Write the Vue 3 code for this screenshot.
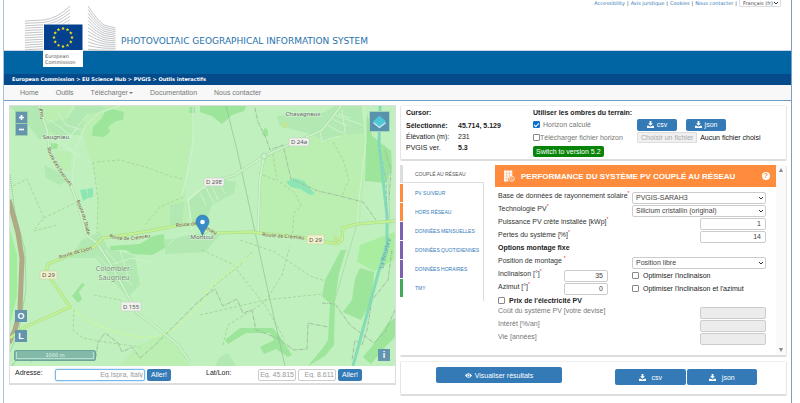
<script setup>
import { ref } from 'vue'

const stripes = Array.from({ length: 13 }, (_, i) => i)
const stars = Array.from({ length: 12 }, (_, i) => {
  const a = (i * Math.PI) / 6
  const cx = 63 + 9 * Math.sin(a)
  const cy = 37.5 - 9 * Math.cos(a)
  const pts = Array.from({ length: 10 }, (_, k) => {
    const r = k % 2 ? 0.8 : 1.9
    const b = (k * Math.PI) / 5
    return `${(cx + r * Math.sin(b)).toFixed(2)},${(cy - r * Math.cos(b)).toFixed(2)}`
  })
  return pts.join(' ')
})

const legal = ['Accessibility', 'Avis juridique', 'Cookies', 'Nous contacter']
const crumbs = ['European Commission', 'EU Science Hub', 'PVGIS', 'Outils interactifs']
const menu = ['Home', 'Outils', 'Télécharger', 'Documentation', 'Nous contacter']
const tabs = [
  { name: 'COUPLÉ AU RÉSEAU', tone: 'active' },
  { name: 'PV SUIVEUR', tone: 'orange' },
  { name: 'HORS RÉSEAU', tone: 'orange' },
  { name: 'DONNÉES MENSUELLES', tone: 'purple' },
  { name: 'DONNÉES QUOTIDIENNES', tone: 'purple' },
  { name: 'DONNÉES HORAIRES', tone: 'purple' },
  { name: 'TMY', tone: 'green' }
]
const costs = [
  { id: 'cost', label: 'Coût du système PV [votre devise]' },
  { id: 'interest', label: 'Intérêt [%/an]' },
  { id: 'life', label: 'Vie [années]' }
]
const horizon = ref(true)
const peak = ref('1')
const loss = ref('14')
const slope = ref('35')
const azimuth = ref('0')
</script>

<template>
  <div class="page">
    <header class="top">
      <svg class="logo" viewBox="24 4 93 66" aria-label="European Commission">
        <g fill="none" stroke="#c3c5c8" stroke-width="1">
          <path v-for="i in stripes" :key="'l' + i" :d="`M25 ${21 + 2.4 * i}L44 ${20 + 2.4 * i}Q58 ${18 + 2.5 * i} 70 ${6 + 3.4 * i}`" />
          <path v-for="i in stripes" :key="'r' + i" :d="`M88 ${6 + 3.6 * i}Q97 ${20 + 2.5 * i} 104 ${25 + 2.1 * i}L115.500 ${28 + 1.85 * i}`" />
        </g>
        <rect x="43" y="23.500" width="40" height="43.500" fill="#fff" />
        <rect x="44" y="24.500" width="38.500" height="25.500" fill="#03418f" />
        <polygon v-for="(s, i) in stars" :key="i" :points="s" fill="#f7e017" />
        <text x="45" y="58" class="logo-text">European</text>
        <text x="45" y="64" class="logo-text">Commission</text>
      </svg>
      <h1>PHOTOVOLTAIC GEOGRAPHICAL INFORMATION SYSTEM</h1>
      <div class="legal">
        <template v-for="l in legal" :key="l"><a href="#">{{ l }}</a><span>|</span></template>
        <span class="pick lang">
          <select aria-label="Langue"><option>Français (fr)</option></select>
          <svg viewBox="0 0 6 4"><path d="M1 1l2 2 2-2" /></svg>
        </span>
      </div>
    </header>
    <div class="band"></div>
    <nav class="crumbs">
      <template v-for="(c, i) in crumbs" :key="c"><span v-if="i"> &gt; </span><a href="#">{{ c }}</a></template>
    </nav>
    <nav class="menu">
      <a v-for="m in menu" :key="m" href="#">{{ m }}<i v-if="m === 'Télécharger'" class="caret"></i></a>
    </nav>

    <main>
      <section class="left">
        <div class="map">
          <svg class="tiles" viewBox="10 106 385 260" preserveAspectRatio="xMidYMid slice">
            <rect x="10" y="106" width="385" height="260" fill="#bff0be" />
            <g fill="#bbefb2">
              <path d="M76 106H195L191 145 184 185 188 225 150 231 108 237 98 238 97 180 87 148Z" />
              <path d="M262 157L330 126 366 120 364 180 360 224 343 228 338 244 258 231 261 180Z" />
              <path d="M42 106H72L62 125 53 140 47 130ZM54 150L72 152 70 172 62 168Z" />
              <path d="M118 366L140 345 168 332 190 366Z" />
            </g>
            <g fill="#b2e8b2">
              <path d="M10 106H40L48 130 40 140 24 120ZM45 127L55 135 80 135 86 115 108 110 100 106H76L68 118 50 122Z" />
              <path d="M44 165L70 178 60 185 46 178ZM82 240L100 232 108 248 135 256 140 285 128 297 112 280 96 258 70 258Z" />
              <path d="M186 203L200 190 225 180 236 182 234 193 212 205 205 225 190 225ZM165 240L205 232 220 235 205 252 165 254Z" />
              <path d="M277 116L325 112 335 106 362 106 364 133 338 136 325 143 315 135 280 126Z" />
              <path d="M215 366L220 357 228 353 236 366ZM170 205L184 202 182 225 170 225Z" />
            </g>
            <g fill="#9ce59a">
              <path d="M105 112L112 109 124 112 123 120 116 121 108 127 110 132 104 137 92 136 93 127 101 119Z" />
              <path d="M200 106H246L244 111 232 115 222 124 212 116 200 112Z" />
              <path d="M367 113L372 136 391 151 392 168 386 183 365 181Z" />
              <path d="M110 246L140 244 153 236 164 234 165 248 152 255 132 254 126 250H111Z" />
              <path d="M82 283L85 284 79 292 82 299 78 303 72 296Z" />
              <path d="M341 250H346L339 273 335 300 334 345 325 356 308 366 322 349 328 340 330 304 322 296 325 280Z" />
              <path d="M360 268L374 272 372 300 361 320 343 312 352 300 355 279Z" />
              <path d="M395 318V337L385 347 371 364 363 357 373 345 388 323Z" />
              <path d="M225 340L240 328 273 328 281 338 292 355 288 357 276 349 264 354 260 347 274 340 270 333 246 333 228 344Z" />
              <path d="M190 107h5v6h-6zM51 143l7 1-1 5h-6zM265 127l3 4v5l-6-1z" />
            </g>
            <path d="M360 245L395 232 394 260 374 271 357 262Z" fill="#a9eda0" />
            <path d="M80 190l6-1 2 9-5 3zM87 189l6-1v9l-5 1zM286 182L294 178 304 181 315 194 310 195 300 189 291 187Z" fill="#8ce6b4" />
            <path d="M282 121l7 2-3 5h-4zM334 235l6 3-3 7h-5z" fill="#bfe79a" />
            <path d="M10 230V325L17 295V255Z" fill="#a0ee9c" />

            <g class="local">
              <path d="M75 150L86 125 100 112 120 106M53 137L65 145 76 153 80 155M65 145L75 130 88 114M50 120L60 127 72 137M58 112L66 125 82 130M69 137L77 129" />
              <path d="M54 140L76 155 73 170 72 185M193 106V145L187 175 181 199" />
              <path d="M200 193L206 205M206 188L214 203M212 186L218 200M220 184L225 194" />
              <path d="M320 130L322 142 332 138 340 136M326 124L336 130 346 134M332 119L348 126M338 114L350 118M342 110L345 132M335 115L362 125" />
              <path d="M363 106L366 140 360 190 357 224M189 232L197 239 211 233M168 245L178 235 187 232" />
              <path d="M105 250L118 264M120 250L128 276M113 264L132 258 150 262M60 256L75 250M120 276L132 285M97 256L112 270" />
            </g>
            <g class="path">
              <path d="M97 162L120 160 145 167 170 176 183 179M93 162L98 200 97 233M183 197L160 207 145 225M13 186L27 179 34 195 44 218 33 231M44 218L75 203M34 231L57 225" />
              <path d="M273 154L277 180 295 193 301 206 294 213 292 240M333 142L343 160 349 180 341 198M275 180L258 173" />
              <path d="M200 302L215 285 240 265 252 252M202 250L232 264 265 305 285 340M240 240L275 252 310 276 325 281M200 315L265 300 322 294M94 295L120 300 138 313M74 309L73 330 83 338 105 342 140 347M223 345L228 325 265 302 282 275 290 246" />
            </g>
            <path class="pale" d="M70 307L90 322 115 332 140 337 155 337 175 328 200 306 210 287 235 267 251 255" />
            <g class="bound">
              <path d="M255 108L258 122 266 138 270 150 283 145 291 179 318 191 340 196 363 202 376 220" />
              <path d="M12 366L20 355 32 362M96 357L98 342 105 333 118 343 122 352 132 347 140 358 155 345 170 330 200 300 215 289 223 306 237 299 243 313 252 310 256 330 277 338 294 350 307 349 308 323 328 327M322 303L335 304 350 325 374 343 385 332 395 310" />
              <path d="M385 150L391 170 389 200M392 250L388 280 372 300 367 330 362 345 355 340 352 360" />
            </g>
            <path d="M226 106L237 150 248 200 268 291 285 366" fill="none" stroke="#8eb796" stroke-width=".6" />
            <path d="M384 145L388 175 390 225M357 224L345 265 335 300" fill="none" stroke="#a9d6a6" stroke-width=".7" />
            <path d="M380 106L379 145 387 215 387 245 378 274 353 366" fill="none" stroke="#84dcb5" stroke-width="3" />
            <path d="M379 113L379 145 386 180 387 220" fill="none" stroke="#8cc4d2" stroke-width="1" stroke-dasharray="4 2" />

            <path d="M9 200L18 233 22 258 20 310 15 330 9 343" fill="none" stroke="#afaa85" stroke-width="5" />
            <path d="M10 175L15 212 25 250 26 290 19 330 10 352" fill="none" stroke="#80ae87" stroke-width=".8" stroke-dasharray="1 1" />

            <g class="road-case"><path d="M39 106L47 130 49 148 58 165 69 180 79 208 86 235 97 243 108 260 122 285 137 313 155 326 178 345 190 362" /><path d="M200 190L215 181 235 175 264 156 300 140 322 130 332 118 341 106M264 156L260 180 258 232" /></g>
            <g class="road"><path d="M39 106L47 130 49 148 58 165 69 180 79 208 86 235 97 243 108 260 122 285 137 313 155 326 178 345 190 362" /><path d="M200 190L215 181 235 175 264 156 300 140 322 130 332 118 341 106M264 156L260 180 258 232M192 230L188 200 205 186" /></g>
            <circle cx="264" cy="156" r="3" fill="#c8f1c6" stroke="#9dce9f" stroke-width=".6" />
            <path class="main-case" d="M10 338L25 327 70 307 46 272 48 264 80 251 94 247 103 238 118 236 150 231 180 225 197 224 217 233 250 232 300 237 337 244 342 240 343 228 357 224 395 221" />
            <path class="main" d="M10 338L25 327 70 307 46 272 48 264 80 251 94 247 103 238 118 236 150 231 180 225 197 224 217 233 250 232 300 237 337 244 342 240 343 228 357 224 395 221" />

            <defs>
              <path id="way-a" d="M47 148Q51 163 76 194" />
              <path id="way-b" d="M76 201Q86 220 90 254" />
              <path id="way-c" d="M109 237Q128 245 170 232" />
              <path id="way-d" d="M176 227L196 225 230 242" />
              <path id="way-e" d="M262 236L322 241" />
              <path id="way-f" d="M60 259Q77 252 110 246" />
            </defs>
            <g class="way">
              <text><textPath href="#way-a">Route des Eversses</textPath></text>
              <text><textPath href="#way-b">Route du Stade</textPath></text>
              <text><textPath href="#way-c">Route de Crémieu</textPath></text>
              <text><textPath href="#way-d">Route de Crémieu</textPath></text>
              <text><textPath href="#way-e">Route de Crémieu</textPath></text>
              <text><textPath href="#way-f">Route de Lyon</textPath></text>
              <text transform="translate(43 119) rotate(-92)">nauf</text>
            </g>
            <g class="place">
              <text x="56" y="139">Saugnieu</text>
              <text x="303" y="116">Chavagneux</text>
              <text x="202" y="239">Montcul</text>
            </g>
            <g class="town"><text x="114" y="271">Colombier-</text><text x="114" y="280">Saugnieu</text></g>
            <text class="river" transform="translate(383 269) rotate(-75)">La Bourbre</text>
            <g class="shield white">
              <rect x="289" y="138" width="20" height="8" rx="1" /><text x="299" y="144">D 24a</text>
              <rect x="204" y="178" width="20" height="8" rx="1" /><text x="214" y="184">D 29E</text>
              <rect x="121" y="302" width="20" height="9" rx="1" /><text x="131" y="309">D 155</text>
            </g>
            <g class="shield">
              <rect x="307" y="235" width="17" height="9" rx="1" /><text x="315.500" y="242">D 29</text>
              <rect x="40" y="271" width="17" height="8" rx="1" /><text x="48.500" y="277">D 29</text>
            </g>
            <path d="M202.500 235.500C200 228 196 226 196 221.500a6.500 6.500 0 0 1 13 0C209 226 205 228 202.500 235.500Z" fill="#398cc7" stroke="#2d75aa" stroke-width=".6" />
            <circle cx="202.500" cy="222" r="2.300" fill="#fff" />
          </svg>
          <div class="zoomers">
            <button type="button" aria-label="Zoom avant"><svg viewBox="0 0 11 11"><path d="M5.500 3v5M3 5.500h5" /></svg></button>
            <button type="button" aria-label="Zoom arrière"><svg viewBox="0 0 11 11"><path d="M3 5.500h5" /></svg></button>
          </div>
          <button type="button" class="layers" aria-label="Couches">
            <svg viewBox="0 0 20 20"><path d="M3 11.500L10 17l7-5.500-7-4z" fill="#d4f0f4" /><path d="M3 10L10 4l7 6-7 5.500z" fill="#50c8d8" /></svg>
          </button>
          <div class="letters"><button type="button">O</button><button type="button">L</button></div>
          <div class="scale"><span>1000 m</span></div>
          <button type="button" class="info">i</button>
        </div>
        <form class="search" @submit.prevent>
          <div class="find">
            <label for="address">Adresse:</label>
            <input id="address" class="focus" placeholder="Eg.Ispra, Italy" />
            <button class="go">Aller!</button>
          </div>
          <div class="find">
            <label for="lat">Lat/Lon:</label>
            <input id="lat" class="coord" placeholder="Eg. 45.815" />
            <input class="coord" aria-label="Longitude" placeholder="Eg. 8.611" />
            <button class="go">Aller!</button>
          </div>
        </form>
      </section>

      <section class="right">
        <div class="card cursor">
          <div class="position">
            <strong>Cursor:</strong>
            <dl>
              <dt><b>Sélectionné:</b></dt><dd><b>45.714, 5.129</b></dd>
              <dt>Élévation (m):</dt><dd>231</dd>
              <dt>PVGIS ver.</dt><dd><b>5.3</b></dd>
            </dl>
          </div>
          <div class="shadow">
            <strong>Utiliser les ombres du terrain:</strong>
            <div class="shadow-row">
              <label class="muted"><input v-model="horizon" type="checkbox" />Horizon calculé</label>
              <div class="small-buttons">
                <button v-for="f in ['csv', 'json']" :key="f" type="button" class="primary">
                  <svg class="dl" viewBox="0 0 12 12"><path d="M4.500 0h3v4H10L6 8 2 4h2.500zM0 8h3l3 2 3-2h3v4H0z" /></svg>{{ f }}
                </button>
              </div>
            </div>
            <div class="shadow-row">
              <label class="muted tight"><input type="checkbox" />Télécharger fichier horizon</label>
              <div class="file"><button type="button" disabled>Choisir un fichier</button><span>Aucun fichier choisi</span></div>
            </div>
            <button type="button" class="switch">Switch to version 5.2</button>
          </div>
        </div>

        <div class="card tool">
          <nav class="tabs">
            <a v-for="t in tabs" :key="t.name" href="#" :class="t.tone">{{ t.name }}</a>
          </nav>
          <form class="form" @submit.prevent>
            <h2>
              <svg class="panel" viewBox="0 0 12 13"><path d="M0 0h9v6a4 4 0 0 0-4 6H0z" fill="#fff" /><path d="M0 3h9M0 6h7M0 9h5M3 0v12M6 0v7" stroke="#ff8c3c" stroke-width=".4" /><circle cx="8.500" cy="9" r="2.800" fill="#ff8c3c" stroke="#fff" stroke-width=".8" /><path d="M9 7L7.500 9.300h2L8.200 11" stroke="#fff" stroke-width=".6" fill="none" /></svg>
              <span>PERFORMANCE DU SYSTÈME PV COUPLÉ AU RÉSEAU</span>
              <button type="button" class="help">?</button>
            </h2>
            <div class="rows">
              <div class="row"><label for="db">Base de données de rayonnement solaire<sup>*</sup></label>
                <span class="pick"><select id="db"><option>PVGIS-SARAH3</option></select><svg viewBox="0 0 6 4"><path d="M1 1l2 2 2-2" /></svg></span></div>
              <div class="row"><label for="tech">Technologie PV<sup>*</sup></label>
                <span class="pick"><select id="tech"><option>Silicium cristallin (original)</option></select><svg viewBox="0 0 6 4"><path d="M1 1l2 2 2-2" /></svg></span></div>
              <div class="row"><label for="peak">Puissance PV crête installée [kWp]<sup>*</sup></label><input id="peak" v-model="peak" class="half" /></div>
              <div class="row"><label for="loss">Pertes du système [%]<sup>*</sup></label><input id="loss" v-model="loss" class="half" /></div>
              <div class="row"><b>Options montage fixe</b></div>
              <div class="row"><label for="mount">Position de montage <sup>*</sup></label>
                <span class="pick"><select id="mount"><option>Position libre</option></select><svg viewBox="0 0 6 4"><path d="M1 1l2 2 2-2" /></svg></span></div>
              <div class="row angle"><label for="slope">Inclinaison [°]<sup>*</sup></label><input id="slope" v-model="slope" />
                <label class="tick"><input type="checkbox" />Optimiser l'inclinaison</label></div>
              <div class="row angle"><label for="azimuth">Azimut [°]<sup>*</sup></label><input id="azimuth" v-model="azimuth" />
                <label class="tick"><input type="checkbox" />Optimiser l'inclinaison et l'azimut</label></div>
              <label class="tick price"><input type="checkbox" /><b>Prix de l'électricité PV</b></label>
              <div v-for="c in costs" :key="c.id" class="row muted"><label :for="c.id">{{ c.label }}</label><input :id="c.id" class="half" disabled /></div>
            </div>
          </form>
          <div class="scrollbar"><i class="up"></i><i class="down"></i></div>
        </div>

        <div class="card actions">
          <button type="button" class="primary view">
            <svg viewBox="0 0 14 10"><path d="M0 5Q7-4 14 5 7 14 0 5Z" fill="#fff" /><circle cx="7" cy="5" r="3.200" fill="#337ab7" /><circle cx="7" cy="5" r="2" fill="#fff" /></svg>
            Visualiser résultats
          </button>
          <div class="exports">
            <button v-for="f in ['csv', 'json']" :key="f" type="button" class="primary">
              <svg class="dl" viewBox="0 0 12 12"><path d="M4.500 0h3v4H10L6 8 2 4h2.500zM0 8h3l3 2 3-2h3v4H0z" /></svg><span>{{ f }}</span>
            </button>
          </div>
        </div>
      </section>
    </main>
  </div>
</template>

<style>
body { margin: 0; background: #fff; }
</style>

<style scoped>
* { box-sizing: border-box; }
.page { margin: 0 8px 0 3px; min-height: 100vh; border-left: 1px solid #a8c1de; border-right: 1px solid #7ba0c8; font: 7px/9px "Liberation Sans", Arial, sans-serif; color: #333; }
button, input, select { font: inherit; margin: 0; }
button { border: 0; padding: 0; cursor: pointer; }
a { color: #337ab7; text-decoration: none; }
input, select { min-width: 0; border: 1px solid #ccc; border-radius: 2px; background: #fff; color: #444; }

.top { position: relative; height: 51px; padding: 0 10px 0 117px; display: flex; justify-content: space-between; border-bottom: 1px solid #c9d5e5; }
.logo { position: absolute; left: 20px; top: 4px; width: 93px; height: 66px; }
.logo-text { font: 5px "DejaVu Sans", sans-serif; fill: #555; }
h1 { margin: 0; align-self: flex-end; padding-bottom: 2px; font: 9px/13px "DejaVu Sans", Verdana, sans-serif; color: #2672ab; white-space: nowrap; }
.legal { display: flex; align-items: center; height: 6px; gap: 2px; font: 5px/6px "DejaVu Sans", Verdana, sans-serif; white-space: nowrap; }
.lang { width: 42px; height: 8px; }
.lang select { height: 8px; padding: 0 2px; font-size: 5px; line-height: 6px; border-color: #ddd; }

.band { height: 23px; background: #0065a2; }
.crumbs { height: 11px; padding-left: 8px; background: #054a8a; color: #fff; font: bold 5px/10px "DejaVu Sans", Verdana, sans-serif; white-space: pre; }
.crumbs a { color: #fff; }
.menu { display: flex; align-items: center; gap: 17px; height: 16px; padding-left: 16px; background: #f8f8f8; border-bottom: 1px solid #6f9bc7; }
.menu a { color: #777; }
.caret { display: inline-block; margin-left: 1px; vertical-align: middle; border: 2px solid transparent; border-top-color: #777; border-bottom: 0; }

main { display: grid; grid-template-columns: 1fr 1fr; gap: 4px; padding: 4px 4px 8px 5px; }
.left { align-self: start; border: 1px solid #ddd; border-bottom: 2px solid #ddd; }
.map { position: relative; }
.tiles { display: block; width: 100%; height: 260px; font-family: "Noto Sans", sans-serif; }
.local path { fill: none; stroke: #cff3ce; stroke-width: 1; }
.path path { fill: none; stroke: #a2d08f; stroke-width: .8; stroke-dasharray: 3 2; }
.pale { fill: none; stroke: #cdf6a0; stroke-width: 1.5; stroke-dasharray: 5 2; }
.bound path { fill: none; stroke: #a0bd9f; stroke-width: 1; stroke-dasharray: 4 1 1 1; }
.road-case path { fill: none; stroke: #a4d6a5; stroke-width: 2.6; }
.road path { fill: none; stroke: #cef4ca; stroke-width: 1.8; }
.main-case { fill: none; stroke: #a5db84; stroke-width: 3; }
.main { fill: none; stroke: #c5f195; stroke-width: 2; }
.way text { font-size: 5px; fill: #5b4d3a; stroke: #d6f4c5; stroke-width: .6px; paint-order: stroke; }
.place text { font-size: 6px; text-anchor: middle; fill: #555e55; stroke: #e0f6df; stroke-width: 1px; paint-order: stroke; }
.town text { font-size: 7px; text-anchor: middle; fill: #7e8e7e; stroke: #d5f5d3; stroke-width: 1px; paint-order: stroke; }
.river { font-size: 6px; fill: #659abe; }
.shield rect { fill: #f1f0cd; stroke: #cdd5a5; stroke-width: .6; }
.shield.white rect { fill: #f0f1ed; stroke: #c3d0c2; }
.shield text { font-size: 6px; text-anchor: middle; fill: #555; }
.map button { display: grid; place-items: center; background: #6494ae; color: #fff; font-weight: bold; }
.zoomers, .letters { position: absolute; left: 5px; display: grid; }
.zoomers { top: 5px; gap: 1px; padding: 1px; background: #9fcda9; border-radius: 1px; }
.zoomers button { width: 11px; height: 11px; }
.zoomers svg { width: 11px; height: 11px; fill: none; stroke: #fff; stroke-width: 1.6; }
.letters { top: 204px; gap: 8px; }
.letters button, .map .info { width: 12px; height: 12px; font-size: 9px; line-height: 12px; }
.map .layers { position: absolute; right: 5px; top: 5px; width: 21px; height: 21px; border: 1px solid #a5d4bc; background: #5893ab; }
.layers svg { width: 19px; height: 19px; }
.map .info { position: absolute; right: 5px; bottom: 5px; }
.scale { position: absolute; left: 4px; bottom: 5px; width: 82px; height: 11px; padding: 1px; background: #82b9a9; border: 1px solid #6ca39b; border-radius: 2px; }
.scale span { display: block; border: 1px solid #b9dfce; border-top: 0; height: 7px; font: 5px/6px "DejaVu Sans", sans-serif; color: #e5f5ed; text-align: center; }

.search { display: grid; grid-template-columns: 1fr 1fr; gap: 35px; height: 17px; padding: 0 33px 0 5px; }
.find { display: flex; align-items: center; justify-content: flex-end; gap: 2px; }
.find label { margin-right: auto; align-self: flex-start; padding-top: 2px; color: #222; }
.find input { width: 90px; height: 12px; padding: 0 1px; text-align: right; }
.find .coord { width: 38px; }
.find .focus { border-color: #7ab8ea; box-shadow: 0 0 2px #8cc5f0; }
input::placeholder { color: #999; opacity: 1; }
.go { width: 24px; height: 12px; border-radius: 2px; background: #337ab7; color: #fff; }

.right { display: grid; gap: 4px; align-content: start; }
.card { border: 1px solid #e6e6e6; border-top-color: #f0f0f0; border-bottom: 2px solid #ddd; border-radius: 2px; background: #fff; }
.cursor { display: grid; grid-template-columns: 127px 1fr; height: 56px; padding: 2px 5px; color: #222; }
dl { display: grid; grid-template-columns: 52px 1fr; margin: 3px 0 0; line-height: 11px; }
dd { margin: 0; }
.shadow { display: grid; align-content: start; justify-items: start; }
.shadow > strong { line-height: 10px; }
.shadow-row { display: grid; grid-template-columns: 104px 1fr; align-items: center; height: 13px; }
.muted { color: #777; }
.muted label, label.muted { white-space: nowrap; }
label.muted { display: flex; align-items: center; gap: 3px; }
label.tight { gap: 0; }
input[type="checkbox"] { appearance: none; flex: none; width: 7px; height: 7px; border: 1px solid #888; border-radius: 1px; display: grid; place-items: center; }
input[type="checkbox"]:checked { background: #0b6fd3; border-color: #0b6fd3; }
input[type="checkbox"]:checked::before { content: ""; width: 4px; height: 2px; border: solid #fff; border-width: 0 0 1px 1px; transform: rotate(-45deg); }
.primary { display: flex; align-items: center; justify-content: center; gap: 3px; border-radius: 2px; background: #337ab7; color: #fff; }
.dl { width: 7px; height: 7px; fill: #fff; }
.small-buttons { display: grid; grid-template-columns: 40px 40px; gap: 9px; }
.small-buttons button { height: 12px; }
.file { display: flex; align-items: center; gap: 3px; white-space: nowrap; color: #111; }
.file button { height: 11px; padding: 0 3px; border: 1px solid #ddd; border-radius: 1px; background: #f0f0f0; color: #aaa; }
.switch { height: 11px; padding: 0 3px; margin-top: 2px; border-radius: 2px; background: #088408; color: #fff; }

.tool { display: grid; grid-template-columns: 84px 1fr 10px; height: 192px; border-top: 0; border-left-width: 0; }
.tabs { display: grid; grid-auto-rows: 18px; gap: 1px; align-content: start; height: 136px; background: linear-gradient(#ddd, #ddd) right 18px / 1px 100% no-repeat; }
.tabs a { padding-left: 12px; border-left: 3px solid; font-size: 5px; line-height: 18px; white-space: nowrap; color: #337ab7; }
.tabs .active { border-color: #ddd; color: #555; background: linear-gradient(#ddd, #ddd) bottom / 100% 1px no-repeat; }
.tabs .orange { border-color: #ff8c3c; }
.tabs .purple { border-color: #7a62b0; }
.tabs .green { border-color: #3fa95c; }
.form { padding-left: 11px; }
h2 { display: flex; align-items: center; height: 22px; margin: 0; padding: 0 6px 0 9px; background: #ff8c3c; color: #fff; font-size: 8px; white-space: nowrap; }
.panel { width: 11px; height: 13px; margin-right: 6px; }
.help { margin-left: auto; width: 8px; height: 8px; border-radius: 50%; background: #fff; color: #ff8c3c; font: bold 7px/8px "Liberation Sans", sans-serif; }
.rows { padding: 4px 10px 0 3px; }
.row { display: grid; grid-template-columns: 1fr 134px; align-items: center; height: 13px; white-space: nowrap; }
.row > label:first-child, .row > b { align-self: start; }
.row > b, .price b { color: #222; }
.row.angle { grid-template-columns: 1fr 44px 134px; column-gap: 24px; }
.row.angle > label:first-child { margin-right: -24px; }
sup { color: #e33; font-size: 5px; line-height: 0; }
.row > input { height: 12px; padding: 0 4px; text-align: right; }
.half { width: 66px; justify-self: end; }
.half:disabled { background: #ececec; }
.tick { display: flex; align-items: center; gap: 4px; color: #222; }
.price { height: 11px; }
.pick { position: relative; display: block; }
.pick select { display: block; appearance: none; width: 100%; height: 12px; padding: 0 3px; line-height: 10px; }
.pick svg { position: absolute; right: 2px; top: 4px; width: 6px; height: 4px; fill: none; stroke: #333; stroke-width: 1; pointer-events: none; }
.pick.lang svg { top: 2px; }
.pick.lang select { height: 8px; line-height: 6px; }
.scrollbar { display: flex; flex-direction: column; justify-content: space-between; align-items: center; padding: 3px 0; background: #fafafa; }
.up, .down { border: 2px solid transparent; }
.up { border-top: 0; border-bottom: 4px solid #888; }
.down { border-bottom: 0; border-top: 4px solid #888; }
.actions { display: grid; grid-template-columns: 126px 142px; justify-content: space-between; align-items: start; height: 35px; padding: 5px 29px 0 35px; }
.actions button { height: 16px; }
.view svg { width: 7px; height: 5px; }
.exports { display: grid; grid-template-columns: 1fr 1fr; gap: 1px; padding-top: 2px; }
.exports button { gap: 6px; }
</style>
